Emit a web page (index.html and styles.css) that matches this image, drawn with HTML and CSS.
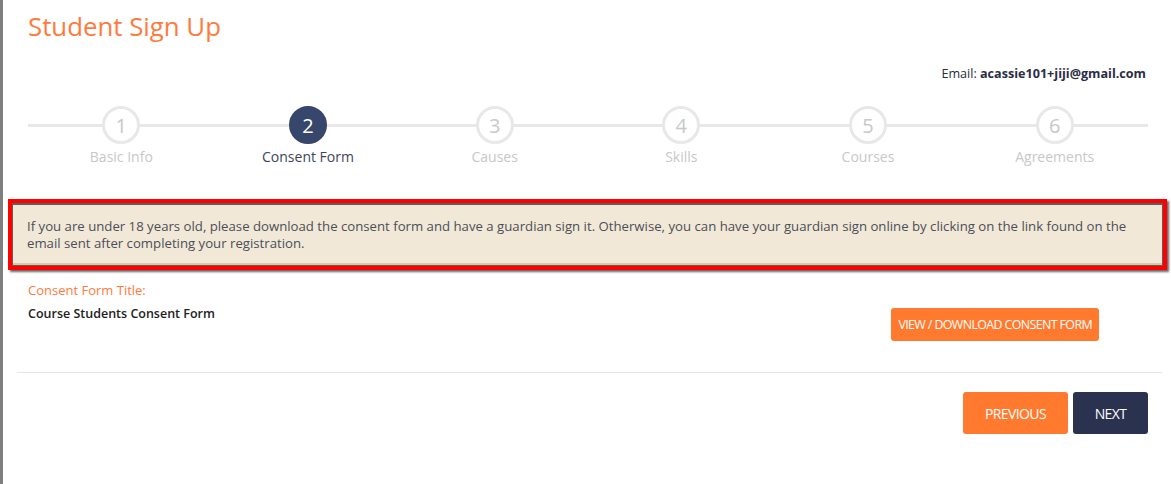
FILE: index.html
```html
<!DOCTYPE html>
<html lang="en">
<head>
    <meta charset="UTF-8">
    <meta name="viewport" content="width=device-width, initial-scale=1.0">
    <title>Student Sign Up</title>
    <link rel="stylesheet" href="styles.css">
</head>
<body>
    <div class="page">
        <h1 class="page-title">Student Sign Up</h1>

        <div class="email-line">Email: <strong>acassie101+jiji@gmail.com</strong></div>

        <!-- Steps -->
        <ul class="steps">
            <li class="step"><span class="step-num">1</span><span class="step-label">Basic Info</span></li>
            <li class="step active"><span class="step-num">2</span><span class="step-label">Consent Form</span></li>
            <li class="step"><span class="step-num">3</span><span class="step-label">Causes</span></li>
            <li class="step"><span class="step-num">4</span><span class="step-label">Skills</span></li>
            <li class="step"><span class="step-num">5</span><span class="step-label">Courses</span></li>
            <li class="step"><span class="step-num">6</span><span class="step-label">Agreements</span></li>
        </ul>

        <div class="highlight">
            <div class="notice">
                If you are under 18 years old, please download the consent form and have a guardian sign it. Otherwise, you can have your guardian sign online by clicking on the link found on the email sent after completing your registration.
            </div>
        </div>

        <div class="consent-row">
            <div class="consent-info">
                <div class="field-label">Consent Form Title:</div>
                <div class="field-value">Course Students Consent Form</div>
            </div>
            <div class="consent-action">
                <button class="btn btn-orange btn-small">VIEW / DOWNLOAD CONSENT FORM</button>
            </div>
        </div>

        <hr class="divider">

        <div class="nav-buttons">
            <button class="btn btn-orange btn-big btn-prev">PREVIOUS</button>
            <button class="btn btn-navy btn-big btn-next">NEXT</button>
        </div>
    </div>
</body>
</html>
```

FILE: styles.css
```css
* {
    margin: 0;
    padding: 0;
    box-sizing: border-box;
}

body {
    font-family: 'Open Sans', 'Noto Sans', sans-serif;
    background: #fff;
    color: #333;
    border-left: 3px solid #7f7f7f;
    min-height: 484px;
}

.page {
    padding: 7px 23px 0 11px;
}

.page-title {
    font-weight: 400;
    font-size: 25.8px;
    color: #ff7a3d;
    padding-left: 14px;
    line-height: 38px;
}

.email-line {
    text-align: right;
    font-size: 12.6px;
    color: #2b2b3a;
    margin-top: 19px;
    padding-right: 2px;
    line-height: 20px;
}

.email-line strong {
    font-weight: 700;
    color: #2b2d45;
}

/* Steps */
.steps {
    list-style: none;
    display: grid;
    grid-template-columns: repeat(6, 1fr);
    margin: 22px 0 0 14px;
    position: relative;
}

.steps:before {
    content: '';
    position: absolute;
    left: 0;
    right: 0;
    top: 18px;
    height: 3px;
    background: #e8e8e8;
}

.step {
    display: flex;
    flex-direction: column;
    align-items: center;
    position: relative;
}

.step-num {
    width: 38px;
    height: 38px;
    border-radius: 50%;
    border: 3px solid #e8e8e8;
    background: #fff;
    color: #c8c8c8;
    font-size: 20px;
    display: flex;
    align-items: center;
    justify-content: center;
}

.step-label {
    font-size: 14px;
    color: #c8c8c8;
    margin-top: 3px;
}

.step.active .step-num {
    background: #37476b;
    border-color: #37476b;
    color: #fff;
}

.step.active .step-label {
    color: #3c4560;
}

/* Notice (red frame is the screenshot annotation) */
.highlight {
    border: 4px solid #ff0000;
    margin: 33px -19px 0 -6px;
    box-shadow: 2px 2px 2px rgba(0, 0, 0, 0.6);
}

.notice {
    background: #f2e8d7;
    border: 1px solid #5e5e5e;
    border-top-width: 2px;
    box-shadow: inset 0 -2px 0 #dfc79f;
    font-size: 13.2px;
    line-height: 17px;
    color: #4a4f58;
    padding: 13px 20px 13px 14px;
}

/* Consent */
.consent-row {
    display: flex;
    justify-content: space-between;
    padding-left: 14px;
    margin-top: 10px;
}

.field-label {
    font-size: 13px;
    color: #ff7a3d;
    line-height: 20px;
}

.field-value {
    font-size: 12.5px;
    font-weight: 600;
    color: #222;
    margin-top: 5px;
}

.consent-action {
    padding-top: 28px;
    padding-right: 49px;
}

.btn {
    border: none;
    border-radius: 3px;
    color: #fff;
    font-family: 'Open Sans', sans-serif;
    cursor: pointer;
}

.btn-orange {
    background: #ff7a2f;
}

.btn-navy {
    background: #2a3250;
}

.btn-small {
    font-size: 12.4px;
    letter-spacing: -0.6px;
    height: 33px;
    padding: 0 7px;
}

.divider {
    border: none;
    border-top: 1px solid #e5e5e5;
    margin: 31px -14px 0 3px;
}

.nav-buttons {
    display: flex;
    justify-content: flex-end;
    gap: 5px;
    margin-top: 19px;
}

.btn-big {
    font-size: 14px;
    letter-spacing: -0.6px;
    height: 42px;
}

.btn-prev {
    width: 105px;
}

.btn-next {
    width: 75px;
}
```
